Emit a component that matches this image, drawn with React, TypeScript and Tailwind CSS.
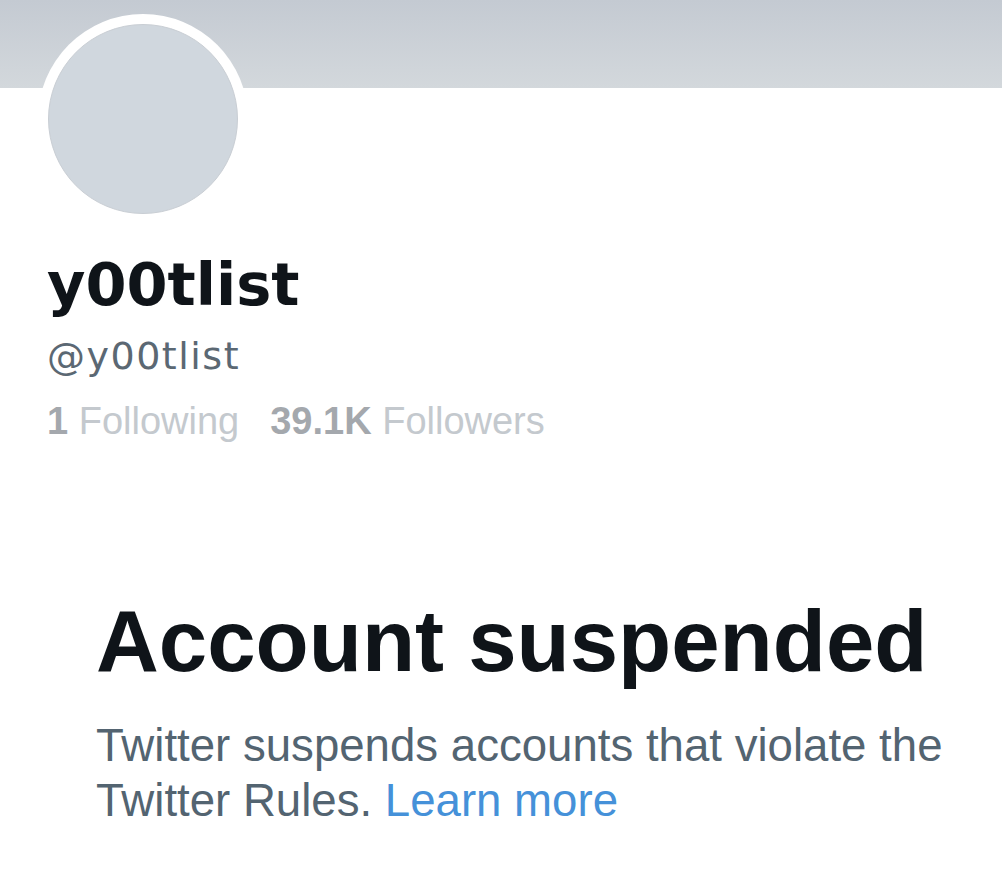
import React from "react";

export default function App() {
  return (
    <div className="w-[1002px] h-[870px] bg-white overflow-hidden">
      <div className="h-[88px] bg-gradient-to-b from-[#c4cad2] to-[#d3d8dc]" />
      <div className="ml-[38px] -mt-[74px] w-[210px] h-[210px] rounded-full bg-white p-[10px]">
        <div className="w-full h-full rounded-full bg-[#d0d7de] border border-[#c9ced4]" />
      </div>
      <div className="pl-[47px]">
        <div
          className="mt-[29px] text-[59px] leading-[64px] font-bold text-[#0f1419]"
          style={{ fontFamily: '"DejaVu Sans", sans-serif' }}
        >
          y00tlist
        </div>
        <div
          className="mt-[17px] text-[38px] leading-[44px] tracking-[1.5px] text-[#5b6873]"
          style={{ fontFamily: '"DejaVu Sans", sans-serif' }}
        >
          @y00tlist
        </div>
        <div
          className="mt-[21px] text-[38px] leading-[44px] text-[#c4c9ce] flex gap-[31px]"
          style={{ fontFamily: '"Liberation Sans", Arial, sans-serif' }}
        >
          <span>
            <span className="font-bold text-[#a4a8ad]">1</span> Following
          </span>
          <span>
            <span className="font-bold text-[#a4a8ad]">39.1K</span> Followers
          </span>
        </div>
      </div>
      <div className="pl-[96px] pr-[40px]" style={{ fontFamily: '"Liberation Sans", Arial, sans-serif' }}>
        <h1 className="mt-[148px] text-[87px] leading-[100px] font-bold text-[#0f1419]">
          Account suspended
        </h1>
        <p className="mt-[27px] w-[866px] text-[45.6px] leading-[55px] text-[#536471]">
          Twitter suspends accounts that violate the Twitter Rules.{" "}
          <span className="text-[#4591d9]">Learn more</span>
        </p>
      </div>
    </div>
  );
}
